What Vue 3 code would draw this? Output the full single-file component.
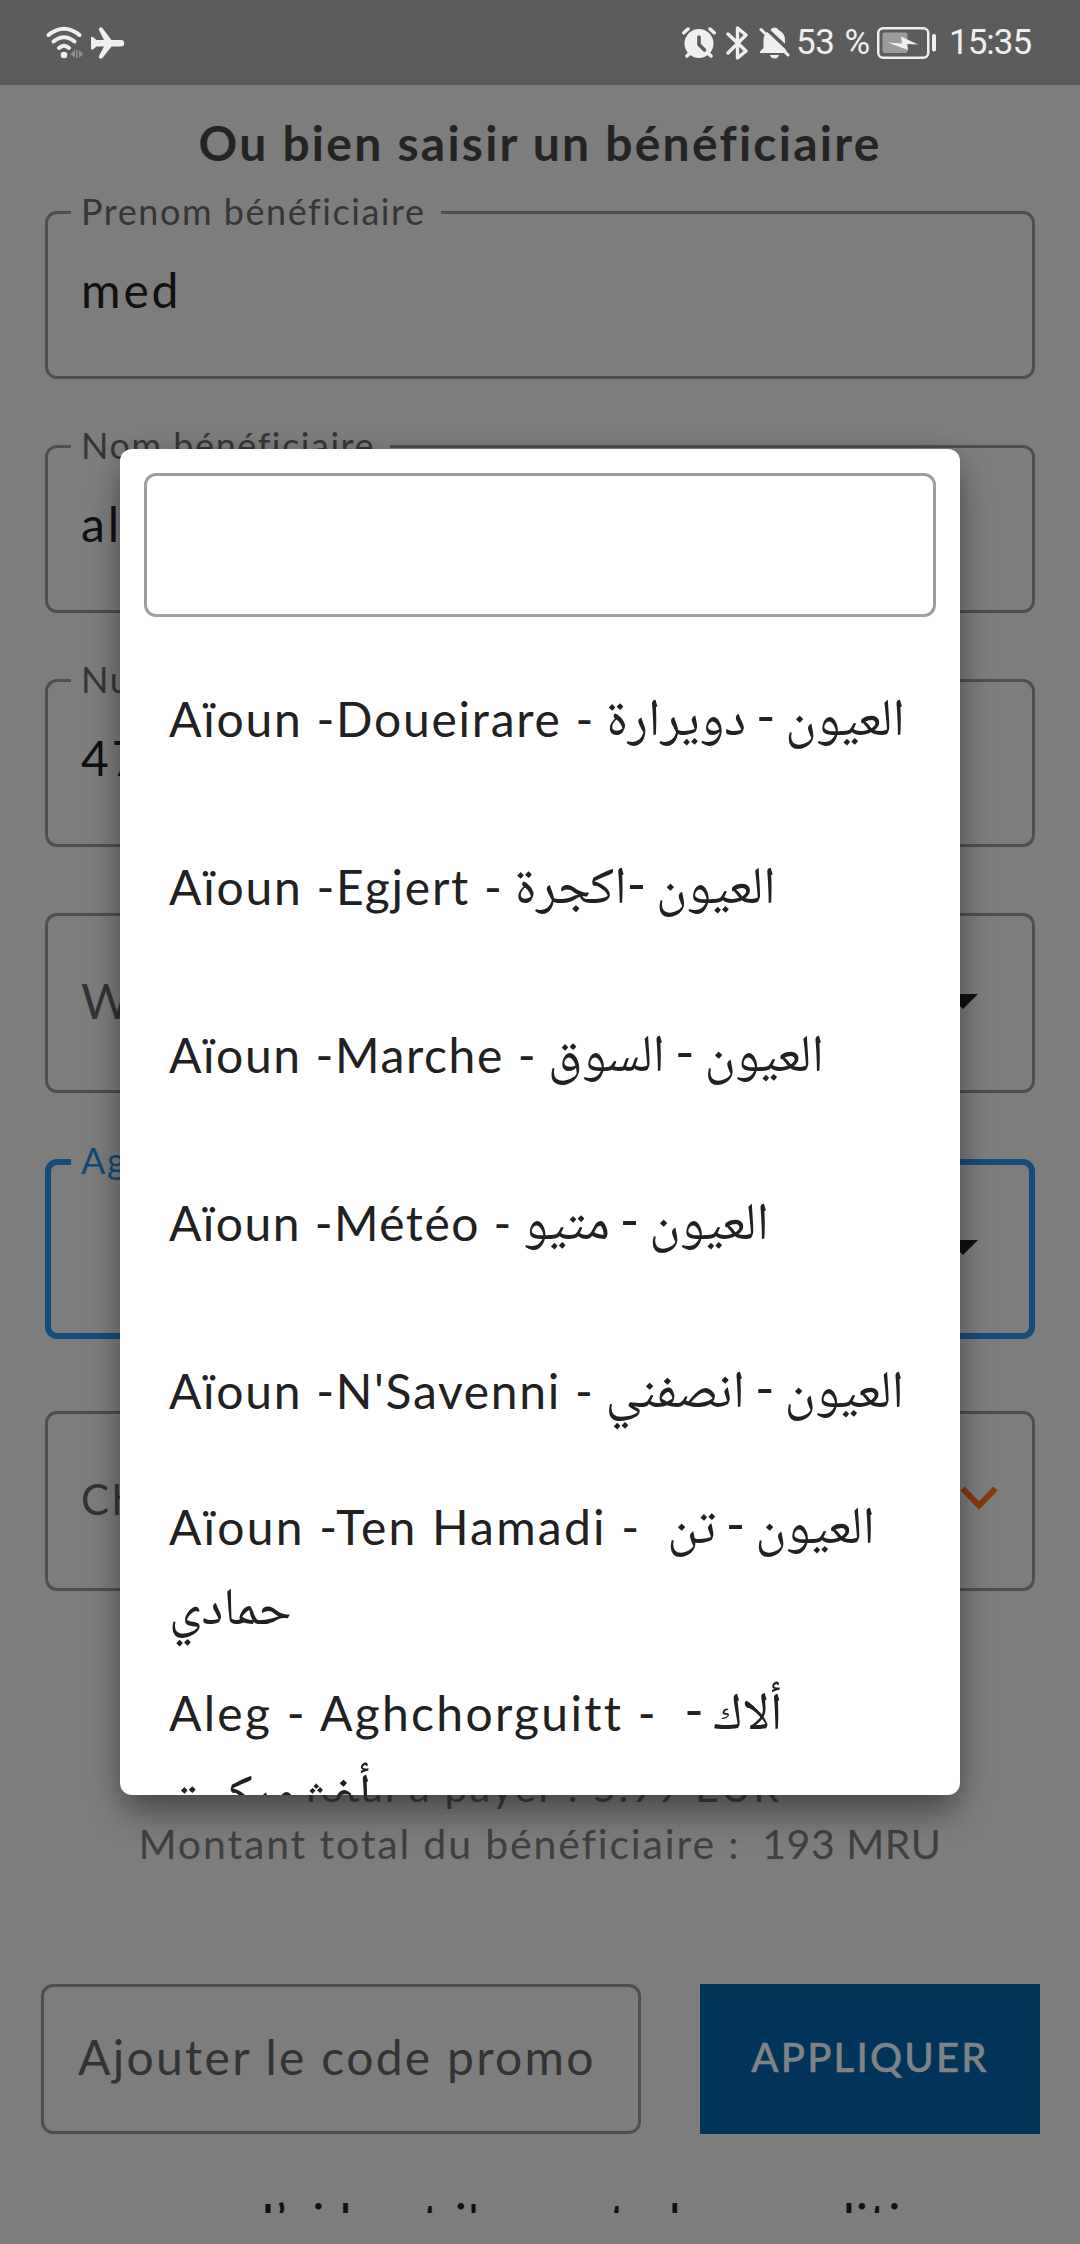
<script setup>
const fields = [
  { label: 'Prenom bénéficiaire', value: 'med' },
  { label: 'Nom bénéficiaire', value: 'ali' },
  { label: 'Numéro de téléphone', value: '47' },
]
const agencies = [
  { fr: 'Aïoun -Doueirare - ', ar: 'العيون - دويرارة' },
  { fr: 'Aïoun -Egjert - ', ar: 'العيون -اكجرة' },
  { fr: 'Aïoun -Marche - ', ar: 'العيون - السوق' },
  { fr: 'Aïoun -Météo - ', ar: 'العيون - متيو' },
  { fr: "Aïoun -N'Savenni - ", ar: 'العيون - انصفني' },
  { fr: 'Aïoun -Ten Hamadi -  ', ar: 'العيون - تن حمادي' },
  { fr: 'Aleg - Aghchorguitt -  ', ar: 'ألاك - أغشوركيت' },
]
</script>

<template>
  <div class="screen">
    <header class="status">
      <div class="left">
        <svg class="wifi" width="40" height="36" viewBox="0 0 40 36">
          <g fill="none" stroke="#efefef" stroke-width="4" stroke-linecap="round">
            <path d="M2.500 10Q18 -2.500 33.500 10" />
            <path d="M7.500 16.500Q18 8 28.500 16.500" />
            <path d="M13 23Q18 18.500 23 23" />
          </g>
          <circle cx="18" cy="30" r="3.300" fill="#efefef" />
          <path d="M24.500 29l4.500-4v8zM30 25h1.500v8H30zM33 25l4.500 4-4.500 4z" fill="#8e8e8e" />
        </svg>
        <svg class="plane" width="34" height="32" viewBox="0 0 34 32">
          <path d="M0 10h2l3.500 3H13L8 3Q7.500 .500 9.500 .500H11L20.500 13H30a3.200 3.200 0 0 1 0 6.400H20.500L11 31.500H9.500Q7.500 31.500 8 29L13 19.400H5.500L2 22.400H0z" fill="#efefef" />
        </svg>
      </div>
      <div class="right">
        <svg class="alarm" width="34" height="32" viewBox="0 0 34 32">
          <circle cx="17" cy="16.500" r="14.500" fill="#efefef" />
          <path d="M1.800 5.800L6 2M32.200 5.800L28 2M5 29l3-3M29 29l-3-3" stroke="#efefef" stroke-width="3.500" stroke-linecap="round" />
          <path d="M17 10v7.500l5.500 5.500" fill="none" stroke="#5c5c5c" stroke-width="3.600" stroke-linecap="round" stroke-linejoin="round" />
        </svg>
        <svg class="bt" width="22" height="34" viewBox="0 0 22 34">
          <path d="M2 8L20 25L11.500 32V2L20 9L2 27" fill="none" stroke="#efefef" stroke-width="3.400" stroke-linejoin="round" stroke-linecap="round" />
        </svg>
        <svg class="bell" width="32" height="32" viewBox="0 0 32 32">
          <path d="M11.500 3Q12.500 .500 15.500 .500T19.500 3Q26 6 26 13V21L28.500 26H2Q.500 26 1 24.500L4.500 21V13Q4.500 6 11.500 3zM11 28h9q-1 3.500-4.500 3.500T11 28z" fill="#efefef" />
          <path d="M4 -1.500L32 25" stroke="#5c5c5c" stroke-width="3.500" />
          <path d="M2 2.500L29 28" stroke="#efefef" stroke-width="3" stroke-linecap="round" />
        </svg>
        <span class="pct">53 %</span>
        <svg class="batt" width="60" height="32" viewBox="0 0 60 32">
          <rect x="1.250" y="1.250" width="50" height="29.500" rx="5" fill="none" stroke="#efefef" stroke-width="2.500" />
          <rect x="5.500" y="5.500" width="25" height="20.500" rx="2" fill="#9b9b9b" />
          <path d="M10.500 15l14.500 1-1-7 17 8-11-.500 1 6z" transform="translate(0 .5)" fill="#efefef" />
          <rect x="55" y="7" width="4" height="17.500" rx="1.800" fill="#efefef" />
        </svg>
        <span class="clock">15:35</span>
      </div>
    </header>

    <main class="page">
      <h1>Ou bien saisir un bénéficiaire</h1>
      <div class="form">
        <div v-for="f in fields" :key="f.label" class="field">
          <label>{{ f.label }}</label>
          <span class="value">{{ f.value }}</span>
        </div>
        <div class="field select">
          <span class="value hint">Wilaya</span>
          <svg class="tri" width="30" height="15" viewBox="0 0 30 15"><path d="M0 0h30L15 15z" fill="#111" /></svg>
        </div>
        <div class="field select focus">
          <label>Agence</label>
          <svg class="tri" width="30" height="15" viewBox="0 0 30 15"><path d="M0 0h30L15 15z" fill="#111" /></svg>
        </div>
        <div class="field select last">
          <span class="value small">Choisir</span>
          <svg class="chev" width="38" height="25" viewBox="0 0 38 25"><path d="M2.500 2.500L19 19.500L35.500 2.500" fill="none" stroke="#88390f" stroke-width="6" /></svg>
        </div>
      </div>
      <div class="totals">
        <p class="due">Total à payer : 5.99 EUR</p>
        <p>Montant total du bénéficiaire :<span class="sum">&nbsp; 193 MRU</span></p>
      </div>
      <div class="promo">
        <div class="code"><span>Ajouter le code promo</span></div>
        <button type="button"><span>APPLIQUER</span></button>
      </div>
      <div class="terms"><p>J’ai lu et j'accepte les conditions</p></div>
    </main>

    <section class="dialog">
      <div class="search"></div>
      <ul>
        <li v-for="(a, i) in agencies" :key="i">
          <p><span :class="['fr', 'f' + (i + 1)]">{{ a.fr }}</span><span class="ar">{{ a.ar }}</span></p>
        </li>
      </ul>
    </section>
  </div>
</template>

<style>
body { margin: 0; background: #7d7d7d; }
</style>

<style scoped>
* { box-sizing: border-box; }
.screen {
  position: relative;
  width: 1080px;
  height: 2244px;
  overflow: hidden;
  background: #7d7d7d;
  font-family: Lato, "Noto Sans", sans-serif;
  font-size: 48px;
  color: #111;
}
h1, p, ul { margin: 0; padding: 0; }
.status {
  height: 85px;
  background: #5c5c5c;
  display: flex;
  justify-content: space-between;
  padding: 0 48px 0 46px;
  color: #efefef;
  font: 35px/88px Roboto, sans-serif;
}
.left, .right { display: flex; align-items: center; white-space: pre; }
.plane { margin-left: 5px; }
.bt { margin-left: 10px; }
.bell { margin-left: 11px; }
.pct { margin-left: 5px; width: 76px; letter-spacing: -0.5px; word-spacing: 2px; }
.batt { margin-left: 5px; }
.clock { margin-left: 12px; width: 83px; letter-spacing: -1px; }
h1 {
  height: 126px;
  padding-top: 30px;
  font-size: 48px;
  line-height: 56px;
  font-weight: 700;
  text-align: center;
  letter-spacing: 2.25px;
  color: #242424;
  white-space: nowrap;
}
.form { display: flex; flex-direction: column; gap: 66px; padding: 0 45px; }
.field {
  position: relative;
  height: 168px;
  border: 3px solid #4f4f4f;
  border-radius: 12px;
  padding: 0 33px;
  display: flex;
  align-items: center;
  justify-content: space-between;
}
.field label {
  position: absolute;
  left: 23px;
  top: -25px;
  padding: 0 15px 0 10px;
  background: #7d7d7d;
  font-size: 36px;
  line-height: 44px;
  color: #363636;
  white-space: nowrap;
  letter-spacing: 1.55px;
}
.value { line-height: 58px; margin-top: -10px; letter-spacing: 2.9px; }
.select { height: 180px; }
.hint { color: #333; margin-top: -4px; }
.small { font-size: 42px; color: #333; margin-top: -5px; }
.tri { margin-left: auto; margin-right: 21px; margin-top: -3px; }
.chev { margin-right: 1px; margin-top: -5px; }
.focus { border: 6px solid #144d7c; padding: 0 30px; }
.focus label { color: #144a78; left: 20px; top: -27px; }
.last { margin-top: 6px; }
.totals {
  margin-top: 167px;
  height: 226px;
  text-align: center;
  font-size: 41px;
  line-height: 57px;
  letter-spacing: 1.85px;
  color: #404040;
  white-space: nowrap;
}
.sum { letter-spacing: 0.5px; }
.due { letter-spacing: 2.2px; }
.promo { display: flex; gap: 59px; padding: 0 40px 0 41px; height: 150px; }
.code {
  width: 600px;
  border: 3px solid #4f4f4f;
  border-radius: 12px;
  padding-left: 34px;
  line-height: 139px;
  letter-spacing: 2.3px;
  color: #333;
  white-space: nowrap;
}
button {
  flex: 1;
  border: 0;
  border-radius: 0;
  padding: 0 0 5px;
  background: #003459;
  color: #7f8386;
  font: 500 40px/146px Lato, sans-serif;
  letter-spacing: 2.2px;
  -webkit-text-stroke: 0.5px #7f8386;
}
.terms { margin-top: 60px; height: 19px; overflow: hidden; padding-left: 254px; }
.terms p { font-size: 48px; line-height: 54px; font-weight: 500; letter-spacing: 1.7px; white-space: nowrap; }
.dialog {
  position: absolute;
  left: 120px;
  top: 449px;
  width: 840px;
  height: 1346px;
  overflow: hidden;
  background: #fff;
  border-radius: 12px;
  padding: 24px;
  color: #212121;
  box-shadow: 0 20px 36px -4px rgba(0, 0, 0, 0.42), 0 0 24px rgba(0, 0, 0, 0.1);
}
.search { height: 144px; border: 3px solid #9e9e9e; border-radius: 12px; margin-bottom: 17px; }
ul { list-style: none; }
li { min-height: 168px; padding: 12px 0 12px 25px; display: flex; align-items: center; }
li p { white-space: pre-wrap; line-height: 81px; width: 752px; }
.fr { margin-right: -3px; }
.f1, .f2 { letter-spacing: 1.75px; }
.f3 { letter-spacing: 1.6px; }
.f4 { letter-spacing: 1.45px; }
.f5 { letter-spacing: 1.7px; }
.f6 { letter-spacing: 2.2px; }
.f7 { letter-spacing: 2.3px; }
.ar {
  font-family: Lato, "Noto Naskh Arabic", "Noto Sans Arabic", "DejaVu Sans", sans-serif;
  font-size: 52.5px;
  line-height: 0;
  word-spacing: -3.5px;
  vertical-align: 2px;
}
</style>
